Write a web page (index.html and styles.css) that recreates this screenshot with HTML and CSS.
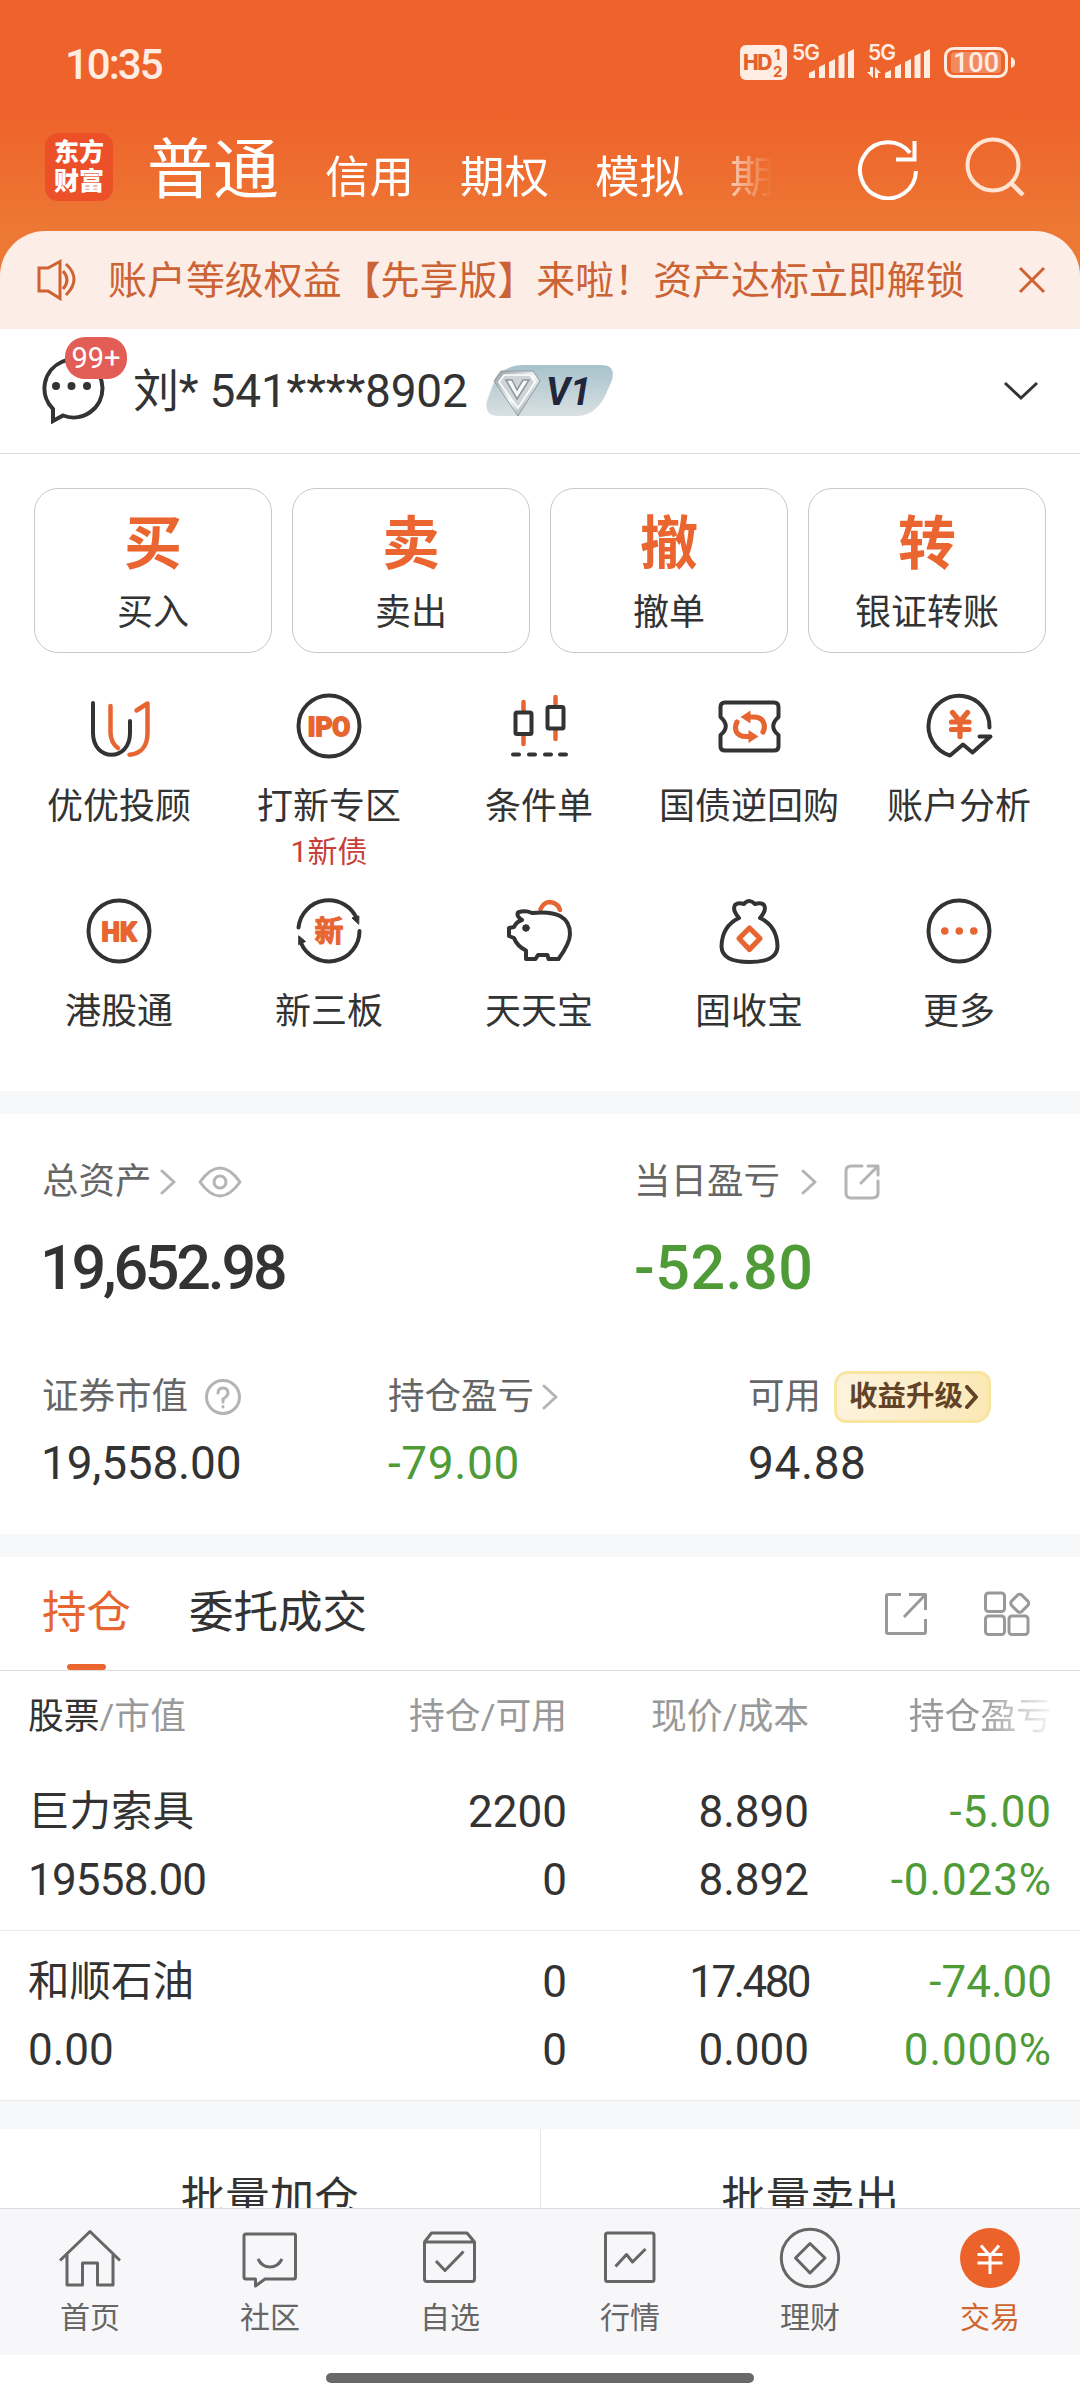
FILE: index.html
```html
<!DOCTYPE html>
<html lang="zh-CN">
<head>
    <meta charset="utf-8" />
    <title>交易</title>
    <meta name="viewport" content="width=device-width, initial-scale=1">
    <link rel="stylesheet" href="styles.css">
</head>
<body>
<div class="app">
    <div class="top">
        <div class="status">
            <span class="time">10:35</span>
            <svg class="status-icons" width="280" height="44" viewBox="738 42 280 44">
                <rect x="740" y="46" width="47" height="35" rx="6" fill="#ffece3"/>
                <text x="743" y="71" class="st-hd">HD</text>
                <text x="774" y="61" class="st-num">1</text>
                <text x="773" y="78" class="st-num">2</text>
                <text x="792" y="61" class="st-5g">5G</text>
                <g fill="#ffece3">
                    <path d="M809 79v-5l6-3v8zM819 79V68l6-3v14zM829 79V63l6-3v19zM838.500 79V57l6-3v25zM848 79V53l6-3v29z"/>
                    <path d="M885 79v-5l6-3v8zM895 79V68l6-3v14zM905 79V63l6-3v19zM914.500 79V57l6-3v25zM924 79V53l6-3v29z"/>
                    <path d="M870 68h3v11l-6-6h3zM876 79h-1V68l6 6h-3v5z"/>
                </g>
                <text x="868" y="61" class="st-5g">5G</text>
                <rect x="945.500" y="49.500" width="61" height="28" rx="8" fill="none" stroke="#ffece3" stroke-width="3"/>
                <rect x="951" y="53" width="50" height="21" rx="4" fill="#fff" opacity=".25"/>
                <path d="M1011 58q4 1 4 5.500t-4 5.500z" fill="#ffece3"/>
                <text x="976" y="73" class="st-bat">100</text>
            </svg>
        </div>
        <div class="nav">
            <div class="logo"><span>东方</span><span>财富</span></div>
            <div class="nav-tabs">
                <span class="cur">普通</span>
                <span>信用</span>
                <span>期权</span>
                <span>模拟</span>
                <span>期货</span>
            </div>
            <svg class="nav-icon" width="64" height="64" viewBox="0 0 64 64">
                <path d="M60 35A28 28 0 1 1 54 17" fill="none" stroke="#fff" stroke-width="4"/>
                <path d="M58.500 5v18.500H40" fill="none" stroke="#fff" stroke-width="4"/>
            </svg>
            <svg class="nav-icon" width="64" height="64" viewBox="0 0 64 64">
                <circle cx="29" cy="29" r="25.500" fill="none" stroke="#ffe3d3" stroke-width="4"/>
                <path d="M46 46L59 59" stroke="#ffe3d3" stroke-width="4.500"/>
            </svg>
        </div>
        <div class="notice">
            <svg width="42" height="42" viewBox="0 0 42 42" fill="none" stroke="#cf6232" stroke-width="3">
                <path d="M3 9h9L24 2.500v37L12 32H3z"/>
                <path d="M27 12q8 9 0 18M30 5q16 15 0 31"/>
            </svg>
            <span class="notice-text">账户等级权益【先享版】来啦！资产达标立即解锁</span>
            <svg width="28" height="28" viewBox="0 0 28 28" stroke="#cf6232" stroke-width="3">
                <path d="M2 2l24 24M26 2L2 26"/>
            </svg>
        </div>
    </div>

    <div class="main">
        <div class="account">
            <div class="msg">
                <svg width="66" height="66" viewBox="0 0 66 66">
                    <path d="M14 63V51A29 29 0 1 1 24 57.500z" fill="none" stroke="#333" stroke-width="4"/>
                    <circle cx="17" cy="28" r="4" fill="#333"/>
                    <circle cx="32.500" cy="28" r="4" fill="#333"/>
                    <circle cx="48" cy="28" r="4" fill="#333"/>
                </svg>
                <span class="badge">99+</span>
            </div>
            <span class="acc-name">刘* 541****8902</span>
            <svg class="vip" width="128" height="52" viewBox="0 0 128 52">
                <defs>
                    <linearGradient id="vipBg" x1="0" y1="0" x2="0" y2="1">
                        <stop offset="0" stop-color="#a7c2cc"/>
                        <stop offset="1" stop-color="#d9e0e2"/>
                    </linearGradient>
                    <linearGradient id="gem" x1="0" y1="0" x2="1" y2="1">
                        <stop offset="0" stop-color="#8f9a9e"/>
                        <stop offset=".5" stop-color="#f4f7f8"/>
                        <stop offset="1" stop-color="#7d888c"/>
                    </linearGradient>
                </defs>
                <path d="M38 0H115Q130 0 126 15L120 29Q110 51 90 51H12Q-2 51 1 36L6 22Q14 0 38 0z" fill="url(#vipBg)"/>
                <path d="M15 6h32l7 10-22 35L8 16z" fill="url(#gem)" stroke="#8f9b9f" stroke-width="1"/>
                <path d="M18 10h26l5 7-17 26-19-26z" fill="#cdd5d8" stroke="#fff" stroke-width="1.500"/>
                <path d="M20 15l11 19 12-19h-6l-6 10-5-10z" fill="#f8fafa" stroke="#8d989c" stroke-width="1.500"/>
                <text x="60" y="40" class="vip-text">V1</text>
            </svg>
            <svg class="down" width="36" height="22" viewBox="0 0 36 22" fill="none" stroke="#333" stroke-width="3">
                <path d="M2 3l16 15L34 3"/>
            </svg>
        </div>

        <div class="cards">
            <div class="card"><b>买</b><span>买入</span></div>
            <div class="card"><b>卖</b><span>卖出</span></div>
            <div class="card"><b>撤</b><span>撤单</span></div>
            <div class="card"><b>转</b><span>银证转账</span></div>
        </div>

        <div class="grid">
            <div class="item">
                <svg class="ic" viewBox="0 0 72 72">
                    <path d="M10 13V43C10 72 47 72 47 43V31"/>
                    <path class="o" d="M27.500 16V43Q28 53 35 58M53.500 20.500L64.500 13.500V43C64.500 57 57 64 46.500 64.700"/>
                </svg>
                <span>优优投顾</span>
            </div>
            <div class="item">
                <svg class="ic" viewBox="0 0 72 72">
                    <circle cx="36" cy="36" r="30.500"/>
                    <text x="36" y="46" class="ic-text">IPO</text>
                </svg>
                <span>打新专区</span>
                <em>1新债</em>
            </div>
            <div class="item">
                <svg class="ic" viewBox="0 0 72 72">
                    <path class="o" d="M20.500 12V20M20.500 46V54M52.500 7V15M52.500 41V49"/>
                    <rect x="12.500" y="22.500" width="16" height="21.500" rx="1.500"/>
                    <rect x="44.500" y="17" width="16" height="21.500" rx="1.500"/>
                    <path d="M10 64.500h6M26 64.500h6M42 64.500h6M57 64.500h6"/>
                </svg>
                <span>条件单</span>
            </div>
            <div class="item">
                <svg class="ic" viewBox="0 0 72 72">
                    <path d="M12 12.500H61Q65.500 12.500 65.500 17V27Q55 36.500 65.500 45V56.500Q65.500 60.500 61 60.500H12Q7.500 60.500 7.500 56.500V45Q18 36.500 7.500 27V17Q7.500 12.500 12 12.500z"/>
                    <path class="o bold" d="M35 27H41C51 27 53 36 50 42M38 46.500H33C22 46.500 21 38 24 32"/>
                    <path class="of" d="M27.500 27l10-6.500v13zM45.500 46.500l-10-6.500v13z"/>
                </svg>
                <span>国债逆回购</span>
            </div>
            <div class="item">
                <svg class="ic" viewBox="0 0 72 72">
                    <path d="M66.500 37.500A30.500 30.500 0 1 0 27 65.500L40 54.500L49.500 62.500L67.500 46.500H56.500"/>
                    <path class="o bold" d="M29.500 22.500L37 31.500L44.500 22.500M28.500 32H46M28.500 39.500H46M37 32V46.500"/>
                </svg>
                <span>账户分析</span>
            </div>
            <div class="item">
                <svg class="ic" viewBox="0 0 72 72">
                    <circle cx="36" cy="36" r="30.500"/>
                    <text x="36" y="46" class="ic-text">HK</text>
                </svg>
                <span>港股通</span>
            </div>
            <div class="item">
                <svg class="ic" viewBox="0 0 72 72">
                    <path d="M5.500 32.500A30.500 30.500 0 0 1 64 24M66.500 36A30.500 30.500 0 0 1 8 48"/>
                    <path class="kf" d="M65.500 29l-6.500-6 6.500-2zM6 41l6.500 5.500-6.500 3z"/>
                    <text x="36" y="47" class="ic-cn">新</text>
                </svg>
                <span>新三板</span>
            </div>
            <div class="item">
                <svg class="ic" viewBox="0 0 72 72">
                    <path class="o" d="M37.500 14Q41 7 47 7Q55 8 57 15"/>
                    <path d="M15 17.500Q22 15 29 18Q67 14 67 39Q67 48 55.500 64H45.500L44.500 60H35L32.500 64H23V55.500Q14 51 11 43L6 41V33L11 32Q13 27 19 25Q13 21 15 17.500z"/>
                    <circle cx="23" cy="33" r="3.300" class="kf"/>
                </svg>
                <span>天天宝</span>
            </div>
            <div class="item">
                <svg class="ic" viewBox="0 0 72 72">
                    <path d="M26 23Q19 15 22 10Q25 7 31 9Q36 3 42 9Q48 7 51 10Q54 15 47 23Q64 31 64.500 51.500Q64 67 36.500 67Q9 67 8.500 51.500Q9 31 26 23z"/>
                    <path class="o bold" d="M36.500 33L47 43.500L36.500 54.500L26 43.500z"/>
                </svg>
                <span>固收宝</span>
            </div>
            <div class="item">
                <svg class="ic" viewBox="0 0 72 72">
                    <circle cx="36" cy="36" r="30.500"/>
                    <path class="of" d="M18 36a3.800 3.800 0 1 0 7.600 0a3.800 3.800 0 1 0-7.600 0M32.500 36a3.800 3.800 0 1 0 7.600 0a3.800 3.800 0 1 0-7.600 0M47 36a3.800 3.800 0 1 0 7.600 0a3.800 3.800 0 1 0-7.600 0"/>
                </svg>
                <span>更多</span>
            </div>
        </div>

        <div class="assets">
            <div class="row-big">
                <div class="col">
                    <div class="label">总资产
                        <svg class="arr near" viewBox="0 0 16 26"><path d="M2 2l12 11L2 24"/></svg>
                        <svg class="eye" width="44" height="32" viewBox="0 0 44 32">
                            <path d="M2 16Q22-12 42 16Q22 44 2 16z"/><circle cx="22" cy="16" r="6"/>
                        </svg>
                    </div>
                    <div class="big n1">19,652.98</div>
                </div>
                <div class="col">
                    <div class="label">当日盈亏
                        <svg class="arr far" viewBox="0 0 16 26"><path d="M2 2l12 11L2 24"/></svg>
                        <svg class="share" width="38" height="38" viewBox="0 0 38 38">
                            <path d="M19 3H8Q3 3 3 8V30Q3 35 8 35H29Q35 35 35 30V18M25 3H35V12M35 3L18 20"/>
                        </svg>
                    </div>
                    <div class="big green n2">-52.80</div>
                </div>
            </div>
            <div class="row-small">
                <div class="col">
                    <div class="label">证券市值
                        <svg class="ask" width="38" height="38" viewBox="0 0 38 38">
                            <circle cx="19" cy="19" r="16.500"/>
                            <path d="M14 15Q14 10 19 10T24 15Q24 18 19 21V24M19 28.500V29"/>
                        </svg>
                    </div>
                    <div class="mid n3">19,558.00</div>
                </div>
                <div class="col">
                    <div class="label">持仓盈亏
                        <svg class="arr near" viewBox="0 0 16 26"><path d="M2 2l12 11L2 24"/></svg>
                    </div>
                    <div class="mid green n4">-79.00</div>
                </div>
                <div class="col">
                    <div class="label">可用
                        <span class="up">收益升级<svg width="14" height="24" viewBox="0 0 14 24"><path d="M2 2l9 10-9 10"/></svg></span>
                    </div>
                    <div class="mid n4">94.88</div>
                </div>
            </div>
        </div>

        <div class="tabs">
            <span class="tab on">持仓</span>
            <span class="tab">委托成交</span>
            <svg class="tool" width="46" height="46" viewBox="0 0 46 46">
                <path d="M18 3.500H5Q3.500 3.500 3.500 5V41Q3.500 42.500 5 42.500H41Q42.500 42.500 42.500 41V28M26 3.500H42.500V19M42.500 3.500L21 26"/>
            </svg>
            <svg class="tool" width="48" height="48" viewBox="0 0 48 48">
                <rect x="2.500" y="3" width="19" height="18.500" rx="3"/>
                <rect x="2.500" y="26" width="19" height="18.500" rx="3"/>
                <rect x="26" y="26" width="19" height="18.500" rx="3"/>
                <rect x="29.500" y="6" width="14.500" height="14.500" rx="3" transform="rotate(45 36.700 13.200)"/>
            </svg>
        </div>

        <div class="tr th">
            <span><i>股票</i>/市值</span>
            <span>持仓/可用</span>
            <span>现价/成本</span>
            <span class="fade">持仓盈亏</span>
        </div>
        <div class="stock">
            <div class="tr">
                <span class="cn">巨力索具</span><span>2200</span><span>8.890</span><span class="green wide">-5.00</span>
            </div>
            <div class="tr">
                <span class="tight">19558.00</span><span>0</span><span>8.892</span><span class="green wide">-0.023%</span>
            </div>
        </div>
        <div class="stock">
            <div class="tr">
                <span class="cn">和顺石油</span><span>0</span><span class="tighter">17.480</span><span class="green">-74.00</span>
            </div>
            <div class="tr">
                <span>0.00</span><span>0</span><span>0.000</span><span class="green wide">0.000%</span>
            </div>
        </div>
        <div class="batch">
            <span>批量加仓</span>
            <span>批量卖出</span>
        </div>
    </div>

    <div class="tabbar">
        <div class="tb">
            <svg viewBox="0 0 64 64"><path d="M2 34.500L32 5.500L62 34.500M9 28.500V59H24.500V37H39.500V59H55V28.500"/></svg>
            <span>首页</span>
        </div>
        <div class="tb">
            <svg viewBox="0 0 64 64"><path d="M8 8H56Q57.500 8 57.500 9.500V51Q57.500 53 55.500 53H27L17.500 60V53H8Q6 53 6 51V10Q6 8 8 8zM20 33Q24 41 32 41T44 33"/></svg>
            <span>社区</span>
        </div>
        <div class="tb">
            <svg viewBox="0 0 64 64"><path d="M6.500 16L13.500 7H49L56.500 16V53Q56.500 55.500 54 55.500H9Q6.500 55.500 6.500 53V16H56.500M18 35L27 44.500L45.500 25.500"/></svg>
            <span>自选</span>
        </div>
        <div class="tb">
            <svg viewBox="0 0 64 64"><rect x="7.500" y="7" width="48.500" height="48.500" rx="2"/><path d="M17.500 40.500L28.500 28.500L34.500 36L47.500 23"/></svg>
            <span>行情</span>
        </div>
        <div class="tb">
            <svg viewBox="0 0 64 64"><circle cx="32" cy="32" r="28.700"/><path d="M32 17.500L47 32L32 47L17.500 32z"/></svg>
            <span>理财</span>
        </div>
        <div class="tb on">
            <svg viewBox="0 0 64 64"><circle cx="32" cy="32" r="30"/><path d="M23 19.500L32 30L41 19.500M19.500 28.500H44.500M19.500 37H44.500M32 29V48"/></svg>
            <span>交易</span>
        </div>
    </div>
    <div class="home"><div class="home-bar"></div></div>
</div>
</body>
</html>
```

FILE: styles.css
```css
*{
    margin: 0;
    padding: 0;
    box-sizing: border-box;
}
body{
    font-family: Roboto, "Noto Sans CJK SC", sans-serif;
    color: #333;
    background: #fff;
}
i, em{
    font-style: normal;
}
svg{
    display: block;
    flex: none;
}
.app{
    width: 1080px;
    height: 2400px;
    overflow: hidden;
    display: flex;
    flex-direction: column;
}

/* 顶部 */
.top{
    height: 329px;
    flex: none;
    background: linear-gradient(#ee632b 115px, #ed7834 231px);
}
.status{
    height: 106px;
    padding: 22px 62px 0 65px;
    display: flex;
    align-items: center;
    justify-content: space-between;
}
.status-icons{
    margin-top: -2px;
}
.time{
    font-size: 42px;
    font-weight: 500;
    color: #ffece3;
    letter-spacing: -2px;
}
.st-hd{
    font: 800 21px Inter, sans-serif;
    fill: #e4602c;
    letter-spacing: -1.500px;
}
.st-num{
    font: 700 15px Inter, sans-serif;
    fill: #e4602c;
}
.st-5g{
    font: 600 21px Inter, sans-serif;
    fill: #ffece3;
    letter-spacing: -1px;
}
.st-bat{
    font: 500 27px Roboto, sans-serif;
    fill: #ffece3;
    text-anchor: middle;
}
.nav{
    height: 125px;
    padding: 0 52px 0 45px;
    display: flex;
    align-items: center;
}
.logo{
    width: 68px;
    height: 68px;
    flex: none;
    margin-top: -3px;
    border-radius: 13px;
    background: #eb5029;
    color: #fff;
    font-size: 25px;
    font-weight: 900;
    line-height: 29px;
    display: flex;
    flex-direction: column;
    align-items: center;
    justify-content: center;
}
.nav-tabs{
    width: 625px;
    height: 100px;
    flex: none;
    margin: 5px 84px 0 34px;
    display: flex;
    align-items: baseline;
    gap: 46px;
    overflow: hidden;
    white-space: nowrap;
    color: #fff;
    font-size: 44.500px;
    line-height: 100px;
    -webkit-mask-image: linear-gradient(90deg, #000 560px, transparent 625px);
    mask-image: linear-gradient(90deg, #000 560px, transparent 625px);
}
.nav-tabs .cur{
    font-size: 66px;
}
.nav-icon{
    margin-top: -2px;
    margin-right: 44px;
}
.nav-icon:last-child{
    margin-right: 0;
}
.notice{
    height: 98px;
    padding: 0 34px 0 36px;
    border-radius: 45px 45px 0 0;
    background: #fcede6;
    display: flex;
    align-items: center;
}
.notice-text{
    flex: 1;
    margin-left: 30px;
    padding-top: 1px;
    font-size: 38.950px;
    line-height: 50px;
    white-space: nowrap;
    color: #cb6335;
}

.main{
    flex: 1;
    min-height: 0;
    overflow: hidden;
}

/* 账户 */
.account{
    height: 125px;
    padding: 0 41px 0 39px;
    border-bottom: 1px solid #dcdcdc;
    display: flex;
    align-items: center;
}
.msg{
    position: relative;
    width: 66px;
    height: 66px;
}
.badge{
    position: absolute;
    left: 26px;
    top: -21px;
    width: 62px;
    height: 42px;
    border-radius: 20px;
    background: #e35d57;
    color: #fff;
    font-size: 29px;
    line-height: 43px;
    text-align: center;
}
.acc-name{
    width: 352px;
    margin-left: 28px;
    font-size: 46px;
    line-height: 60px;
    letter-spacing: -.200px;
    white-space: nowrap;
}
.vip{
    margin-left: 1px;
}
.vip-text{
    font: italic 700 38px Roboto, sans-serif;
    fill: #22263a;
}
.down{
    margin-left: auto;
}

.cards{
    padding: 34px 34px 0;
    display: flex;
    gap: 20px;
}
.card{
    flex: 1;
    height: 165px;
    border: 1px solid #c8c8c8;
    border-radius: 24px;
    display: flex;
    flex-direction: column;
    align-items: center;
}
.card b{
    margin-top: 21px;
    font-size: 58px;
    line-height: 68px;
    color: #ea6530;
}
.card span{
    margin-top: 11px;
    font-size: 36px;
    line-height: 48px;
}

.grid{
    height: 438px;
    padding: 37px 14px 0;
    display: grid;
    grid-template-columns: repeat(5, 210px);
    grid-template-rows: 205px 205px;
}
.item{
    display: flex;
    flex-direction: column;
    align-items: center;
    font-size: 36px;
}
.item span{
    margin-top: 20px;
    line-height: 50px;
    white-space: nowrap;
}
.item em{
    font-size: 30px;
    line-height: 40px;
    color: #c8403a;
}
.ic{
    width: 72px;
    height: 72px;
    fill: none;
    stroke: #333;
    stroke-width: 4;
    stroke-linecap: round;
    stroke-linejoin: round;
}
.ic .o{
    stroke: #e76530;
    stroke-width: 4.500;
}
.ic .bold{
    stroke-width: 5.200;
}
.ic .of{
    fill: #e76530;
    stroke: none;
}
.ic .kf{
    fill: #333;
    stroke-width: 1;
}
.ic-text{
    font: 700 26px Roboto, sans-serif;
    fill: #e76530;
    stroke: #e76530;
    stroke-width: 2;
    text-anchor: middle;
}
.ic-cn{
    font: 700 29px "Noto Sans CJK SC", sans-serif;
    fill: #e76530;
    stroke: #e76530;
    stroke-width: 1;
    text-anchor: middle;
}

/* 资产 */
.assets{
    height: 466px;
    padding: 43px 42px 0;
    border-top: 23px solid #f7f8fa;
    border-bottom: 23px solid #f7f8fa;
}
.label{
    height: 50px;
    display: flex;
    align-items: center;
    font-size: 36.500px;
    line-height: 50px;
    white-space: nowrap;
    color: #666;
}
.label svg{
    fill: none;
    stroke: #b4b4b4;
    stroke-width: 3;
    stroke-linecap: round;
    stroke-linejoin: round;
}
.arr{
    width: 16px;
    height: 26px;
}
.near{
    margin-left: 8px;
}
.far{
    margin-left: 21px;
}
.eye{
    margin-left: 22px;
}
.share{
    margin-left: 26px;
}
.ask{
    margin-left: 16px;
}
.row-big{
    display: grid;
    grid-template-columns: 592px 1fr;
}
.big{
    margin-top: 25px;
    font-size: 61px;
    font-weight: 500;
    line-height: 72px;
}
.row-small{
    margin-top: 68px;
    display: grid;
    grid-template-columns: 346px 360px 1fr;
}
.mid{
    margin-top: 16px;
    font-size: 46px;
    line-height: 50px;
}
.green{
    color: #4e9b38;
}
.n1{
    letter-spacing: -3.200px;
    margin-left: -2px;
}
.n2{
    letter-spacing: .500px;
}
.n3{
    letter-spacing: -.200px;
    margin-left: -1px;
}
.n4{
    letter-spacing: .600px;
}
.label .up{
    width: 157px;
    height: 52px;
    margin-left: 13px;
    padding-left: 12px;
    border: 3px solid #f7e5a0;
    border-radius: 14px 12px 16px 12px;
    background: linear-gradient(100deg, #fdf3df, #fbe8b4);
    display: flex;
    align-items: center;
    font-size: 28.500px;
    font-weight: 700;
    color: #624327;
}
.label .up svg{
    margin-left: 2px;
    stroke: #624327;
    stroke-width: 4;
}

/* 持仓 */
.tabs{
    height: 114px;
    padding: 0 49px 0 42px;
    border-bottom: 1px solid #ddd;
    display: flex;
    align-items: center;
}
.tab{
    height: 113px;
    margin-right: 58px;
    font-size: 44.500px;
    line-height: 112px;
}
.tab.on{
    color: #e76530;
    display: flex;
    flex-direction: column;
    align-items: center;
}
.tab.on::after{
    content: "";
    width: 39px;
    height: 6px;
    margin-top: -5px;
    border-radius: 3px;
    background: #ea6530;
}
.tool{
    fill: none;
    stroke: #999;
    stroke-width: 3;
    stroke-linejoin: round;
}
.tab + .tool{
    margin-left: auto;
    margin-right: 54px;
}
.tr{
    height: 68px;
    padding: 0 28px;
    display: grid;
    grid-template-columns: 295px 244px 242px 243px;
    font-size: 44px;
    line-height: 70px;
    text-align: right;
    white-space: nowrap;
}
.tr span:first-child{
    text-align: left;
}
.tr .cn{
    font-size: 41.500px;
}
.tr .tight{
    letter-spacing: -.800px;
}
.tr .tighter{
    letter-spacing: -2.600px;
}
.tr .wide{
    letter-spacing: .900px;
}
.th{
    height: 90px;
    font-size: 35.800px;
    line-height: 92px;
    color: #999;
}
.th i{
    color: #333;
}
.fade{
    -webkit-mask-image: linear-gradient(90deg, #000 170px, transparent 250px);
    mask-image: linear-gradient(90deg, #000 170px, transparent 250px);
}
.stock{
    height: 170px;
    padding-top: 16px;
    border-bottom: 1px solid #eaeaea;
}
.batch{
    height: 140px;
    border-top: 28px solid #f7f8fa;
    display: flex;
}
.batch span{
    flex: 1;
    padding-top: 37px;
    font-size: 44.500px;
    line-height: 66px;
    text-align: center;
}
.batch span + span{
    border-left: 1px solid #e6e6e6;
}

/* 底部 */
.tabbar{
    height: 147px;
    flex: none;
    border-top: 1px solid #dcdcdf;
    background: #f7f7fa;
    display: flex;
}
.tb{
    flex: 1;
    padding-top: 17px;
    display: flex;
    flex-direction: column;
    align-items: center;
    font-size: 30px;
    line-height: 40px;
    color: #666;
}
.tb svg{
    width: 64px;
    height: 64px;
    fill: none;
    stroke: #666;
    stroke-width: 3;
    stroke-linejoin: round;
}
.tb span{
    margin-top: 8px;
}
.tb.on{
    color: #d0662f;
}
.tb.on svg{
    stroke: #fff;
}
.tb.on circle{
    fill: #ec622b;
    stroke: none;
}
.home{
    height: 45px;
    flex: none;
    padding-top: 18px;
}
.home-bar{
    width: 428px;
    height: 10px;
    margin: 0 auto;
    border-radius: 5px;
    background: #696969;
}
```
